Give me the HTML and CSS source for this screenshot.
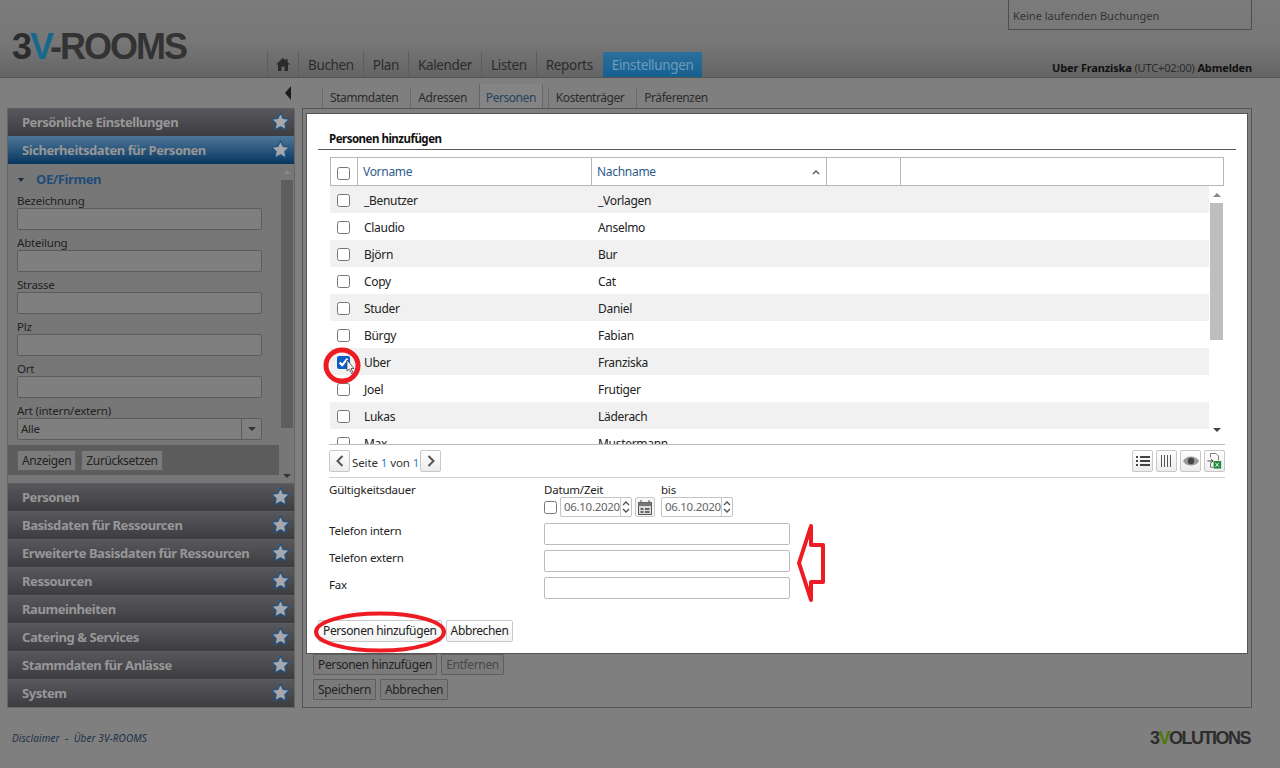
FILE: index.html
```html
<!DOCTYPE html>
<html lang="de">
<head>
  <meta charset="UTF-8">
  <title>3V-ROOMS</title>
  <link rel="stylesheet" href="styles.css">
</head>
<body>

  <svg width="0" height="0" class="defs">
    <symbol id="star" viewBox="0 0 18 18">
      <path d="M9 .8l2.500 5.300 5.900.8-4.300 4.100 1.100 5.800L9 14l-5.200 2.800 1.100-5.800L.6 6.900l5.900-.8z" fill="#a6a6ab" stroke="#1c5587" stroke-width="1.100" stroke-linejoin="round"/>
    </symbol>
    <symbol id="chev-up" viewBox="0 0 8 5">
      <path d="M1 4l3-3 3 3" fill="none" stroke="#555" stroke-width="1.400"/>
    </symbol>
    <symbol id="chev-down" viewBox="0 0 8 5">
      <path d="M1 1l3 3 3-3" fill="none" stroke="#555" stroke-width="1.400"/>
    </symbol>
  </svg>

  <header class="header">
    <div class="running">Keine laufenden Buchungen</div>
    <div class="header-row">
      <div class="logo"><span class="logo-3">3</span><span class="logo-v">V</span>-ROOMS</div>
      <nav class="nav">
        <a class="nav-item nav-home">
          <svg width="14" height="13" viewBox="0 0 14 13"><path d="M7 0L0 6.500h2V13h3.500V8.500h3V13H12V6.500h2L11.500 4V1H10v1.500z" fill="#2b2b2b"/></svg>
        </a>
        <a class="nav-item">Buchen</a>
        <a class="nav-item">Plan</a>
        <a class="nav-item">Kalender</a>
        <a class="nav-item">Listen</a>
        <a class="nav-item">Reports</a>
        <a class="nav-item nav-active">Einstellungen</a>
      </nav>
      <div class="user"><b>Uber Franziska</b> <span class="utc">(UTC+02:00)</span> <b>Abmelden</b></div>
    </div>
  </header>

  <main class="main">
    <aside class="side">
      <div class="side-toggle"><span class="toggle-arrow"></span></div>
      <div class="acc">
        <div class="acc-head"><span>Persönliche Einstellungen</span><svg class="star"><use href="#star"/></svg></div>
        <div class="acc-head acc-open"><span>Sicherheitsdaten für Personen</span><svg class="star"><use href="#star"/></svg></div>
        <div class="acc-body">
          <div class="filter">
            <div class="filter-fields">
              <div class="filter-title"><span class="caret"></span>OE/Firmen</div>
              <label class="f-label">Bezeichnung</label>
              <input class="f-input" type="text">
              <label class="f-label">Abteilung</label>
              <input class="f-input" type="text">
              <label class="f-label">Strasse</label>
              <input class="f-input" type="text">
              <label class="f-label">Plz</label>
              <input class="f-input" type="text">
              <label class="f-label">Ort</label>
              <input class="f-input" type="text">
              <label class="f-label">Art (intern/extern)</label>
              <div class="f-select"><span>Alle</span><i class="f-select-btn"><b class="arrow-down"></b></i></div>
            </div>
            <div class="filter-bar">
              <button class="dim-btn">Anzeigen</button>
              <button class="dim-btn">Zurücksetzen</button>
            </div>
          </div>
          <div class="side-scroll">
            <b class="arrow-up"></b>
            <div class="side-thumb"></div>
            <b class="arrow-down"></b>
          </div>
        </div>
        <div class="acc-head"><span>Personen</span><svg class="star"><use href="#star"/></svg></div>
        <div class="acc-head"><span>Basisdaten für Ressourcen</span><svg class="star"><use href="#star"/></svg></div>
        <div class="acc-head"><span>Erweiterte Basisdaten für Ressourcen</span><svg class="star"><use href="#star"/></svg></div>
        <div class="acc-head"><span>Ressourcen</span><svg class="star"><use href="#star"/></svg></div>
        <div class="acc-head"><span>Raumeinheiten</span><svg class="star"><use href="#star"/></svg></div>
        <div class="acc-head"><span>Catering &amp; Services</span><svg class="star"><use href="#star"/></svg></div>
        <div class="acc-head"><span>Stammdaten für Anlässe</span><svg class="star"><use href="#star"/></svg></div>
        <div class="acc-head"><span>System</span><svg class="star"><use href="#star"/></svg></div>
      </div>
    </aside>

    <section class="content">
      <div class="tabs">
        <a class="tab">Stammdaten</a>
        <a class="tab">Adressen</a>
        <a class="tab tab-active">Personen</a>
        <a class="tab">Kostenträger</a>
        <a class="tab">Präferenzen</a>
      </div>
      <div class="panel">
        <div class="panel-row">
          <button class="dim-btn">Personen hinzufügen</button>
          <button class="dim-btn dim-off">Entfernen</button>
        </div>
        <div class="panel-row">
          <button class="dim-btn">Speichern</button>
          <button class="dim-btn">Abbrechen</button>
        </div>
      </div>
    </section>
  </main>

  <footer class="footer">
    <div class="foot-links">Disclaimer &nbsp;-&nbsp; Über 3V-ROOMS</div>
    <div class="foot-logo">3<span class="foot-v">V</span>OLUTIONS</div>
  </footer>

  <div class="modal">
    <h3 class="modal-title">Personen hinzufügen</h3>

    <div class="grid-wrap">
      <div class="grid-head">
        <div class="gh gh-check"><input type="checkbox"></div>
        <div class="gh gh-first">Vorname</div>
        <div class="gh gh-last">Nachname<svg class="sort" width="8" height="5"><use href="#chev-up"/></svg></div>
        <div class="gh gh-empty"></div>
        <div class="gh gh-rest"></div>
      </div>
      <div class="grid-body">
        <div class="rows">
          <div class="row"><input type="checkbox"><span class="c-first">_Benutzer</span><span>_Vorlagen</span></div>
          <div class="row"><input type="checkbox"><span class="c-first">Claudio</span><span>Anselmo</span></div>
          <div class="row"><input type="checkbox"><span class="c-first">Björn</span><span>Bur</span></div>
          <div class="row"><input type="checkbox"><span class="c-first">Copy</span><span>Cat</span></div>
          <div class="row"><input type="checkbox"><span class="c-first">Studer</span><span>Daniel</span></div>
          <div class="row"><input type="checkbox"><span class="c-first">Bürgy</span><span>Fabian</span></div>
          <div class="row"><input type="checkbox" checked><span class="c-first">Uber</span><span>Franziska</span></div>
          <div class="row"><input type="checkbox"><span class="c-first">Joel</span><span>Frutiger</span></div>
          <div class="row"><input type="checkbox"><span class="c-first">Lukas</span><span>Läderach</span></div>
          <div class="row"><input type="checkbox"><span class="c-first">Max</span><span>Mustermann</span></div>
        </div>
        <div class="grid-scroll">
          <b class="arrow-up"></b>
          <div class="grid-thumb"></div>
          <b class="arrow-down"></b>
        </div>
      </div>
    </div>

    <div class="pager">
      <button class="icon-btn">
        <svg width="8" height="12" viewBox="0 0 8 12"><path d="M6.500 1L1.500 6l5 5" fill="none" stroke="#555" stroke-width="2"/></svg>
      </button>
      <span class="page-text">Seite <em>1</em> von <em>1</em></span>
      <button class="icon-btn">
        <svg width="8" height="12" viewBox="0 0 8 12"><path d="M1.500 1l5 5-5 5" fill="none" stroke="#555" stroke-width="2"/></svg>
      </button>
      <div class="pager-tools">
        <button class="icon-btn">
          <svg width="14" height="10" viewBox="0 0 14 10"><path d="M0 1h2M4 1h10M0 5h2M4 5h10M0 9h2M4 9h10" stroke="#444" stroke-width="2"/></svg>
        </button>
        <button class="icon-btn">
          <svg width="11" height="12" viewBox="0 0 11 12"><path d="M.5 0v12M3.500 0v12M6.500 0v12M9.500 0v12" stroke="#555" stroke-width="1"/></svg>
        </button>
        <button class="icon-btn">
          <svg width="16" height="10" viewBox="0 0 16 10"><path d="M0 5c3-6 13-6 16 0-3 6-13 6-16 0z" fill="#999"/><circle cx="8" cy="5" r="3.200" fill="#444"/></svg>
        </button>
        <button class="icon-btn">
          <svg width="15" height="16" viewBox="0 0 16 18"><path d="M3.500 5V.5h6l3 3V8" fill="none" stroke="#666"/><path d="M0 9h6M4 7l2.500 2L4 11" fill="none" stroke="#333"/><path d="M3.500 11v5h3" fill="none" stroke="#666"/><rect x="7" y="9" width="8.500" height="8.500" fill="#1f8a3c"/><path d="M9 11l4 4.500M13 11l-4 4.500" stroke="#fff"/></svg>
        </button>
      </div>
    </div>

    <div class="form">
      <div class="form-row form-row-date">
        <label class="form-label">Gültigkeitsdauer</label>
        <div class="date-group">
          <div class="date-caption">Datum/Zeit</div>
          <div class="date-line">
            <input type="checkbox">
            <div class="date-field"><span>06.10.2020</span><i class="spin"><svg width="8" height="5"><use href="#chev-up"/></svg><svg width="8" height="5"><use href="#chev-down"/></svg></i></div>
            <button class="cal-btn">
              <svg width="14" height="15" viewBox="0 0 14 15"><rect x=".5" y="2.500" width="13" height="12" fill="#ddd" stroke="#555"/><path d="M.5 2.500h13V6H.5z" fill="#777"/><path d="M3 0v3M11 0v3" stroke="#555"/><path d="M2.500 8h3v2h-3zM7 8h4.500v2H7zM2.500 11h3v2h-3zM7 11h4.500v2H7z" fill="#666"/></svg>
            </button>
          </div>
        </div>
        <div class="date-group">
          <div class="date-caption">bis</div>
          <div class="date-line">
            <div class="date-field"><span>06.10.2020</span><i class="spin"><svg width="8" height="5"><use href="#chev-up"/></svg><svg width="8" height="5"><use href="#chev-down"/></svg></i></div>
          </div>
        </div>
      </div>
      <div class="form-row"><label class="form-label">Telefon intern</label><input class="form-input" type="text"></div>
      <div class="form-row"><label class="form-label">Telefon extern</label><input class="form-input" type="text"></div>
      <div class="form-row"><label class="form-label">Fax</label><input class="form-input" type="text"></div>
    </div>

    <div class="modal-actions">
      <button class="btn">Personen hinzufügen</button>
      <button class="btn">Abbrechen</button>
    </div>
  </div>

  <!-- red markup drawn on top of the screenshot -->
  <svg class="markup" width="1280" height="768" viewBox="0 0 1280 768">
    <ellipse cx="342" cy="365.500" rx="16" ry="15.500" fill="none" stroke="#ed1c24" stroke-width="5"/>
    <path d="M347 360v11l2.500-2 2 4.500 1.500-.7-2-4.300h3z" fill="#fff" stroke="#444" stroke-width=".8"/>
    <ellipse cx="380" cy="632" rx="64" ry="18.500" fill="none" stroke="#ed1c24" stroke-width="4"/>
    <path d="M811 526l-12 37 12 37v-18h12v-37h-12z" fill="none" stroke="#ed1c24" stroke-width="4" stroke-linejoin="round"/>
  </svg>

</body>
</html>
```

FILE: styles.css
```css
* {
  box-sizing: border-box;
}
html, body {
  margin: 0;
  height: 768px;
  overflow: hidden;
}
body {
  position: relative;
  background-color: #7f7f7f;
  color: #1d1d1d;
  font-family: "Noto Sans", "Open Sans", Arial, sans-serif;
  font-size: 12px;
  letter-spacing: -.3px;
}
button, input {
  font-family: inherit;
  font-size: 12px;
  letter-spacing: inherit;
}
input[type=checkbox] {
  margin: 0;
  width: 13px;
  height: 13px;
  flex: none;
  accent-color: #0b5ec9;
}
.defs {
  position: absolute;
}

/* header */
.header {
  height: 78px;
  border-bottom: 1px solid #555;
  background: linear-gradient(#7b7b7b, #777 55%, #646464);
  display: flex;
  flex-direction: column;
}
.running {
  align-self: flex-end;
  width: 244px;
  height: 30px;
  margin-right: 28px;
  padding: 8px 4px 0;
  border: 1px solid #4d4d4d;
  border-top: none;
  font-size: 11px;
  line-height: 15px;
  letter-spacing: 0;
  color: #333;
}
.header-row {
  flex: 1;
  display: flex;
  align-items: flex-end;
  padding: 0 28px 0 12px;
}
.logo {
  width: 255px;
  height: 47px;
  font-family: "Liberation Sans", Arial, sans-serif;
  font-size: 36px;
  font-weight: bold;
  line-height: 34px;
  letter-spacing: -2px;
  color: #333;
}
.logo-3 {
  color: #2c2c2c;
}
.logo-v {
  color: #16698c;
}
.nav {
  display: flex;
  height: 25px;
}
.nav-item {
  padding: 0 9px;
  border-left: 1px solid #5d5d5d;
  font-size: 13.500px;
  letter-spacing: -.35px;
  line-height: 26px;
  color: #2c2c2c;
}
.nav-home {
  width: 30px;
  padding: 6px 0 0 8px;
  line-height: 0;
  margin-right: 1px;
}
.nav-active {
  background: linear-gradient(#2b6f9e, #16608f);
  border-left: none;
  margin-left: 1px;
  color: #6d9cbd;
}
.user {
  margin-left: auto;
  padding-bottom: 2px;
  font-size: 11px;
  letter-spacing: -.15px;
  line-height: 15px;
  color: #111;
}
.utc {
  color: #2b2b2b;
}

/* page body */
.main {
  display: flex;
  height: 630px;
  padding-left: 7px;
}
.side {
  width: 288px;
}
.side-toggle {
  height: 30px;
  padding: 8px 4px 0 0;
  display: flex;
  justify-content: flex-end;
}
.toggle-arrow {
  width: 0;
  height: 0;
  border-style: solid;
  border-width: 7px 6px 7px 0;
  border-color: transparent #1c1c1c transparent transparent;
}
.acc {
  border: 1px solid #666;
  border-top: none;
  height: 600px;
}
.acc-head {
  height: 28px;
  padding: 0 4px 2px 14px;
  display: flex;
  align-items: center;
  justify-content: space-between;
  border-top: 1px solid #5e5e62;
  background: linear-gradient(#58585c, #3c3c41);
  font-size: 13px;
  font-weight: bold;
  letter-spacing: -.45px;
  color: #979797;
}
.acc-open {
  background: linear-gradient(#4c7497, #06365f);
  border-top-color: #4c7497;
}
.star {
  width: 19px;
  height: 19px;
  flex: none;
}
.acc-body {
  height: 319px;
  display: flex;
  background-color: #777;
}
.filter {
  width: 271px;
}
.filter-fields {
  height: 281px;
  padding: 6px 0 0 9px;
}
.filter-title {
  height: 19px;
  display: flex;
  align-items: center;
  font-size: 13px;
  font-weight: bold;
  letter-spacing: -.4px;
  line-height: 19px;
  color: #1f4d78;
}
.caret {
  width: 0;
  height: 0;
  margin: 0 12px 0 1px;
  border-style: solid;
  border-width: 4px 3.500px 0;
  border-color: #1a2d40 transparent transparent;
}
.f-label {
  display: block;
  height: 18px;
  margin-top: 1px;
  padding-top: 3px;
  font-size: 11.500px;
  letter-spacing: -.2px;
  line-height: 15px;
  color: #222;
}
.f-input, .f-select {
  display: block;
  width: 245px;
  height: 22px;
  margin-bottom: 2px;
  border: 1px solid #5c5c5c;
  border-radius: 2px;
  background-color: #7f7f7f;
}
.f-select {
  display: flex;
  justify-content: space-between;
  padding-left: 3px;
  font-size: 11.500px;
  line-height: 20px;
  color: #222;
}
.f-select-btn {
  width: 20px;
  border-left: 1px solid #5c5c5c;
  display: flex;
  align-items: center;
  justify-content: center;
}
.arrow-down, .arrow-up {
  display: block;
  width: 0;
  height: 0;
  border-style: solid;
}
.arrow-down {
  border-width: 4px 4px 0;
  border-color: #333 transparent transparent;
}
.arrow-up {
  border-width: 0 4px 4px;
  border-color: transparent transparent #888;
}
.filter-bar {
  height: 30px;
  padding-left: 9px;
  display: flex;
  align-items: center;
  gap: 5px;
  background-color: #5c5c5c;
}
.dim-btn {
  height: 21px;
  padding: 0 4px;
  border: 1px solid #5f5f5f;
  border-radius: 1px;
  background-color: #7b7b7b;
  font-size: 12px;
  letter-spacing: -.35px;
  line-height: 17px;
  color: #222;
}
.dim-off {
  color: #4a4a4a;
}
.side-scroll {
  width: 15px;
  display: flex;
  flex-direction: column;
  align-items: center;
  justify-content: space-between;
  padding: 6px 0 5px;
}
.side-thumb {
  width: 12px;
  height: 248px;
  margin-bottom: 40px;
  background-color: #5e5e5e;
}

/* tabs and panel behind the dialog */
.content {
  width: 950px;
  margin-left: 7px;
}
.tabs {
  height: 30px;
  padding: 9px 0 0 20px;
  display: flex;
}
.tab {
  padding: 0 11px 0 7px;
  border-left: 1px solid #6a6a6a;
  border-right: 1px solid transparent;
  line-height: 21px;
  letter-spacing: -.45px;
  color: #2c2c2c;
}
.tab-active {
  background-color: #848484;
  color: #27435f;
  border: none;
  box-shadow: 1px 0 0 #666, -1px 0 0 #666;
  padding: 0 6px;
  margin: -3px 6px 0 1px;
  line-height: 27px;
}
.panel {
  height: 600px;
  padding: 0 0 7px 10px;
  border: 1px solid #555;
  display: flex;
  flex-direction: column;
  justify-content: flex-end;
  gap: 4px;
}
.panel-row {
  display: flex;
  gap: 4px;
}
.footer {
  display: flex;
  justify-content: space-between;
  align-items: center;
  height: 60px;
  padding: 0 30px 0 12px;
}
.foot-links {
  font-size: 10px;
  font-style: italic;
  letter-spacing: .1px;
  color: #1c3248;
}
.foot-logo {
  font-family: "Liberation Sans", Arial, sans-serif;
  font-size: 18px;
  font-weight: bold;
  letter-spacing: -1.500px;
  color: #2d2d2d;
}
.foot-v {
  color: #4b7a08;
}

/* dialog */
.modal {
  position: absolute;
  left: 306px;
  top: 113px;
  width: 942px;
  height: 541px;
  padding: 15px 11px 0;
  background-color: #fff;
  border: 1px solid #555;
  font-size: 12px;
  color: #222;
}
.modal-title {
  margin: 0;
  height: 21px;
  padding-left: 11px;
  border-bottom: 1px solid #555;
  font-size: 11.500px;
  letter-spacing: -.5px;
  line-height: 20px;
  color: #111;
}
.grid-wrap {
  width: 894px;
  margin: 7px 0 0 12px;
}
.grid-head {
  display: flex;
  height: 29px;
  border: 1px solid #b6b6be;
  color: #2d5d8c;
}
.gh {
  height: 100%;
  border-right: 1px solid #b6b6be;
  display: flex;
  align-items: center;
  line-height: 27px;
}
.gh-check {
  width: 27px;
  padding: 3px 0 0 6px;
}
.gh-first {
  width: 234px;
  padding-left: 5px;
}
.gh-last {
  width: 235px;
  padding-left: 5px;
  justify-content: space-between;
  padding-right: 6px;
}
.gh-empty {
  width: 74px;
}
.gh-rest {
  flex: 1;
  border-right: none;
}
.sort {
  margin-top: 1px;
}
.grid-body {
  display: flex;
  height: 258px;
  overflow: hidden;
}
.rows {
  flex: 1;
}
.row {
  height: 27px;
  display: flex;
  align-items: center;
  padding: 2px 0 0 7px;
  line-height: 25px;
}
.row:nth-child(odd) {
  background-color: #f1f1f1;
}
.c-first {
  width: 234px;
  margin-left: 14px;
}
.grid-scroll {
  width: 15px;
  display: flex;
  flex-direction: column;
  align-items: center;
  padding-top: 7px;
}
.grid-thumb {
  width: 13px;
  height: 137px;
  margin-top: 6px;
  margin-bottom: 88px;
  background-color: #bebebe;
}
.grid-scroll .arrow-down {
  border-top-color: #444;
}
.pager {
  display: flex;
  align-items: center;
  height: 34px;
  margin-left: 11px;
  border-top: 1px solid #bbb;
  border-bottom: 1px solid #d2d2d2;
  width: 896px;
}
.icon-btn {
  width: 21px;
  height: 22px;
  padding: 0;
  display: flex;
  align-items: center;
  justify-content: center;
  border: 1px solid #c8c8c8;
  border-radius: 2px;
  background: linear-gradient(#fff, #ececec);
}
.page-text {
  margin: 3px 2px 0;
  width: 66px;
  font-size: 11.500px;
  letter-spacing: -.1px;
  color: #333;
  white-space: nowrap;
}
.page-text em {
  font-style: normal;
  color: #3a7fc4;
}
.pager-tools {
  margin-left: auto;
  display: flex;
  gap: 3px;
}
.form {
  margin-left: 11px;
}
.form-row {
  display: flex;
  height: 27px;
}
.form-row-date {
  height: 45px;
  padding-top: 3px;
}
.form-label {
  width: 215px;
  font-size: 11.500px;
  letter-spacing: -.2px;
  line-height: 16px;
}
.form-row-date .form-label {
  line-height: 18px;
}
.form-input {
  width: 246px;
  height: 22px;
  border: 1px solid #bbb;
  border-radius: 2px;
}
.date-group {
  margin-right: 6px;
}
.date-caption {
  height: 14px;
  font-size: 11.500px;
  letter-spacing: -.2px;
  line-height: 18px;
}
.date-line {
  display: flex;
  align-items: center;
  gap: 3px;
  margin-top: 2px;
}
.date-field {
  width: 72px;
  height: 20px;
  padding-left: 3px;
  display: flex;
  justify-content: space-between;
  border: 1px solid #c4c4c4;
  border-radius: 2px;
  line-height: 18px;
  font-size: 11.500px;
  color: #666;
}
.spin {
  width: 12px;
  display: flex;
  flex-direction: column;
  align-items: center;
  justify-content: center;
  gap: 2px;
  border-left: 1px solid #ccc;
}
.cal-btn {
  width: 20px;
  height: 20px;
  padding: 0;
  display: flex;
  align-items: center;
  justify-content: center;
  border: 1px solid #c8c8c8;
  border-radius: 2px;
  background: #f6f6f6;
}
.modal-actions {
  display: flex;
  gap: 4px;
  margin-top: 16px;
}
.btn {
  height: 22px;
  padding: 0 4px;
  border: 1px solid #c8c8c8;
  border-radius: 2px;
  background: linear-gradient(#fff, #f2f2f2);
  letter-spacing: -.38px;
  line-height: 18px;
  color: #222;
}

/* annotations */
.markup {
  position: absolute;
  left: 0;
  top: 0;
  pointer-events: none;
}
```
